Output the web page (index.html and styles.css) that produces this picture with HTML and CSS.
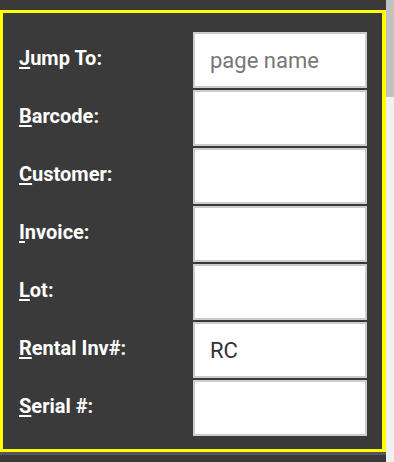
FILE: index.html
```html
<!DOCTYPE html>
<html lang="en">
  <head>
    <meta charset="UTF-8" />
    <meta name="viewport" content="width=device-width, initial-scale=1.0" />
    <title>Quick Lookup</title>
    <link rel="stylesheet" href="styles.css">
  </head>
  <body>
    <div class="page">
      <form class="lookup">
        <label class="lookup-label" for="jump"><u>J</u>ump To:</label>
        <input class="lookup-input" id="jump" type="text" placeholder="page name" />

        <label class="lookup-label" for="barcode"><u>B</u>arcode:</label>
        <input class="lookup-input" id="barcode" type="text" />

        <label class="lookup-label" for="customer"><u>C</u>ustomer:</label>
        <input class="lookup-input" id="customer" type="text" />

        <label class="lookup-label" for="invoice"><u>I</u>nvoice:</label>
        <input class="lookup-input" id="invoice" type="text" />

        <label class="lookup-label" for="lot"><u>L</u>ot:</label>
        <input class="lookup-input" id="lot" type="text" />

        <label class="lookup-label" for="rental"><u>R</u>ental Inv#:</label>
        <input class="lookup-input" id="rental" type="text" value="RC" />

        <label class="lookup-label" for="serial"><u>S</u>erial #:</label>
        <input class="lookup-input" id="serial" type="text" />
      </form>
      <div class="next-section"></div>
    </div>

    <!-- scrollbar of the panel -->
    <div class="scrollbar">
      <div class="scrollbar-thumb"></div>
    </div>
  </body>
</html>
```

FILE: styles.css
```css
body {
  margin: 0;
  display: flex;
  height: 100vh;
  background-color: #3a3a3a;
  font-family: Roboto, "Liberation Sans", sans-serif;
  overflow: hidden;
}

.page {
  width: 386px;
  padding-top: 10px;
}

/* Yellow framed lookup box */
.lookup {
  display: grid;
  grid-template-columns: 174px 174px;
  row-gap: 2px;
  margin: 0;
  padding: 19px 15px 13px 16px;
  border: 3px solid #ffff00;
  border-right-width: 4px;
}

.lookup-label {
  display: flex;
  align-items: center;
  padding-bottom: 5px;
  color: #ffffff;
  font-size: 20px;
  font-weight: bold;
}

.lookup-label u {
  text-decoration-thickness: 2px;
  text-underline-offset: 2px;
}

.lookup-input {
  box-sizing: border-box;
  width: 174px;
  height: 56px;
  margin: 0;
  padding: 0 15px;
  border: 2px solid #cccccc;
  border-radius: 0;
  background-color: #ffffff;
  color: #333333;
  font-family: Roboto, "Liberation Sans", sans-serif;
  font-size: 22px;
  outline: none;
}

.lookup-input::placeholder {
  color: #777777;
}

.next-section {
  height: 20px;
  border-top: 3px solid #575757;
}

.scrollbar {
  width: 8px;
  background-color: #f1f1f1;
}

.scrollbar-thumb {
  height: 97px;
  background-color: #c1c1c1;
}
```
